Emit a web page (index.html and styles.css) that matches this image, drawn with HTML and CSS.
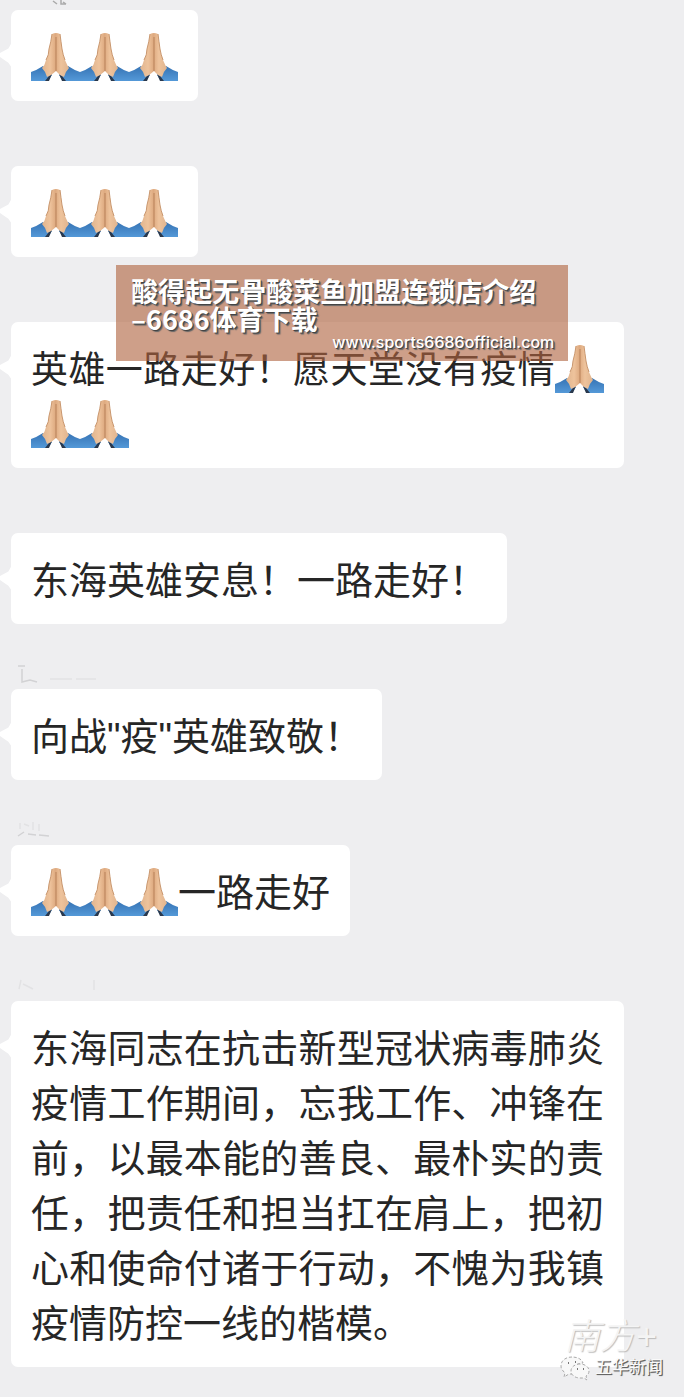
FILE: index.html
```
<!DOCTYPE html>
<html lang="zh-CN">
<head>
<meta charset="utf-8">
<meta name="viewport" content="width=device-width, initial-scale=1">
<title>群聊消息</title>
<link rel="stylesheet" href="styles.css">
</head>
<body>
<svg class="defs" aria-hidden="true">
  <defs>
    <linearGradient id="sleeve" x1="0" y1="0" x2="0" y2="1">
      <stop offset="0" stop-color="#3673b4"/>
      <stop offset="1" stop-color="#5499d8"/>
    </linearGradient>
    <linearGradient id="skin" x1="0" y1="0" x2="1" y2="0">
      <stop offset="0" stop-color="#e0b48e"/>
      <stop offset=".3" stop-color="#eec39c"/>
      <stop offset=".5" stop-color="#deaa80"/>
      <stop offset=".7" stop-color="#eec39c"/>
      <stop offset="1" stop-color="#e0b48e"/>
    </linearGradient>
    <symbol id="pray" viewBox="0 0 49 48">
      <path fill="url(#sleeve)" d="M0 39 Q6 37 12 33 L21 42 L17 48 H0Z M49 39 Q43 37 37 33 L28 42 L32 48 H49Z"/>
      <path fill="#29384d" d="M14 48 L18 43 L21 41 L18 48Z M35 48 L31 43 L28 41 L31 48Z"/>
      <path fill="url(#skin)" d="M21 1 Q25 -1 29 1 Q30 9 31 16 Q32 22 34 27 Q36 32 38 35 Q34 39 33 44 Q28 42 25 38 Q21 42 16 44 Q15 39 11 35 Q14 32 15 27 Q18 22 18 16 Q20 9 21 1Z"/>
      <path fill="none" stroke="#b9825a" d="M25 4 V38"/>
      <path fill="none" stroke="#c9976f" d="M21 1 Q20 9 18 16 Q18 22 15 27 M29 1 Q30 9 31 16 Q32 22 34 27"/>
    </symbol>
  </defs>
</svg>

<main class="chat">
  <article class="message">
    <svg class="sender sender-first" viewBox="0 0 110 20" aria-hidden="true"><path d="M42 15l4 3M50 14v4h5M52 16l3 2"/></svg>
    <p class="bubble"><svg class="pray"><use href="#pray"/></svg><svg class="pray"><use href="#pray"/></svg><svg class="pray"><use href="#pray"/></svg></p>
  </article>
  <article class="message">
    <p class="bubble"><svg class="pray"><use href="#pray"/></svg><svg class="pray"><use href="#pray"/></svg><svg class="pray"><use href="#pray"/></svg></p>
  </article>
  <article class="message">
    <p class="bubble compact">英雄一路走好！愿天堂没有疫情<svg class="pray"><use href="#pray"/></svg><svg class="pray"><use href="#pray"/></svg><svg class="pray"><use href="#pray"/></svg></p>
  </article>
  <article class="message">
    <p class="bubble">东海英雄安息！一路走好！</p>
  </article>
  <article class="message">
    <svg class="sender" viewBox="0 0 110 20" aria-hidden="true"><path d="M7 1h7M11 4v13l8-2 7 2"/><path class="trace" d="M39 14h22M65 14h20"/></svg>
    <p class="bubble">向战"疫"英雄致敬！</p>
  </article>
  <article class="message">
    <svg class="sender" viewBox="0 0 110 20" aria-hidden="true"><path class="trace" d="M9 2v6M13 3l5 2M22 1v8M28 3v7"/><path d="M7 15l6-4M17 13l8 1M28 14l10 1"/></svg>
    <p class="bubble"><svg class="pray"><use href="#pray"/></svg><svg class="pray"><use href="#pray"/></svg><svg class="pray"><use href="#pray"/></svg>一路走好</p>
  </article>
  <article class="message">
    <svg class="sender" viewBox="0 0 110 20" aria-hidden="true"><path class="trace" d="M10 3l-2 9M12 7l10 5M83 3v10"/></svg>
    <p class="bubble">东海同志在抗击新型冠状病毒肺炎疫情工作期间，忘我工作、冲锋在前，以最本能的善良、最朴实的责任，把责任和担当扛在肩上，把初心和使命付诸于行动，不愧为我镇疫情防控一线的楷模。</p>
  </article>

  <aside class="banner">
    <h1 class="banner-title">酸得起无骨酸菜鱼加盟连锁店介绍<br>–6686体育下载</h1>
    <span class="banner-url">www.sports6686official.com</span>
  </aside>

  <footer class="watermark">
    <span class="brand">南方<span class="plus">+</span></span>
    <span class="account">
      <svg class="wechat" viewBox="0 0 30 26" aria-hidden="true">
        <path d="M12 2C5 2 1 6 1 11c0 3 2 5 4 7l-1 4 5-3 5 0c-3-7 3-11 9-11-1-4-6-6-11-6Z"/>
        <path d="M20 9c-5 0-9 3-9 7s4 7 9 7l4 0 3 2-1-4c2-1 3-3 3-5 0-4-4-7-9-7Z"/>
        <path class="eyes" d="M8 8h1M15 7h1M17 14h1M23 14h1"/>
      </svg>
      五华新闻
    </span>
  </footer>
</main>
</body>
</html>
```
FILE: styles.css
```
* { box-sizing: border-box; }

body {
  margin: 0;
  background: #eeeef0;
  color: #262626;
  font-family: "Liberation Sans", "Noto Sans CJK SC", sans-serif;
}

.defs {
  position: absolute;
  width: 0;
  height: 0;
}

.chat {
  position: relative;
  display: flex;
  flex-direction: column;
  align-items: flex-start;
  gap: 65px;
  padding: 10px 60px 30px 11px;
}

.message {
  position: relative;
  max-width: 613px;
}

/* Tail pointing at the sender */
.message::before {
  content: "";
  position: absolute;
  left: -11px;
  top: 32px;
  width: 12px;
  height: 26px;
  background: #fff;
  clip-path: polygon(100% 0, 70% 25%, 0 42%, 0 58%, 70% 80%, 100% 100%);
}

.bubble {
  margin: 0;
  padding: 21px 20px 15px;
  border-radius: 7px;
  background: #fff;
  font-size: 38px;
  line-height: 55px;
  text-align: justify;
}

.bubble.compact { font-size: 37px; }

.pray {
  width: 49px;
  height: 48px;
  vertical-align: -10px;
}

.sender {
  position: absolute;
  left: 0;
  bottom: 100%;
  width: 110px;
  height: 20px;
  margin-bottom: 4px;
  fill: none;
  stroke: #d2d2d4;
  stroke-width: 1.5;
}

.sender-first { stroke: #aaa; }

.trace { stroke: #e2e2e4; }

.banner {
  position: absolute;
  top: 265px;
  left: 17%;
  width: 452px;
  padding: 12px 14px 10px 15px;
  background: rgba(176, 100, 64, .62);
  color: #fff;
  text-shadow: 1px 1px 0 #444, 2px 2px 1px #666;
}

.banner-title {
  margin: 0;
  font-family: "Noto Sans CJK SC", sans-serif;
  font-size: 27px;
  font-weight: 700;
  line-height: 28px;
}

.banner-url {
  display: block;
  font-family: Inter, sans-serif;
  font-size: 16px;
  font-weight: 500;
  line-height: 18px;
  text-align: right;
}

.watermark {
  position: absolute;
  right: 21px;
  bottom: 16px;
  display: flex;
  flex-direction: column;
  align-items: flex-end;
  color: #f4f4f4;
}

.brand {
  padding-right: 6px;
  font-size: 36px;
  font-style: italic;
  font-weight: 300;
  line-height: 36px;
  text-shadow: 1px 1px 1px #bbb;
}

.plus { font-style: normal; }

.account {
  display: flex;
  align-items: center;
  gap: 5px;
  color: #fafafa;
  font-size: 17px;
  line-height: 24px;
  text-shadow: 1px 1px 0 #666, 1px 1px 1px #555;
}

.wechat {
  width: 30px;
  height: 26px;
  fill: #f8f8f8;
  stroke: #aaa;
  stroke-width: 1;
  stroke-dasharray: 3 2;
}

.eyes {
  stroke: #777;
  stroke-width: 2;
}
```
